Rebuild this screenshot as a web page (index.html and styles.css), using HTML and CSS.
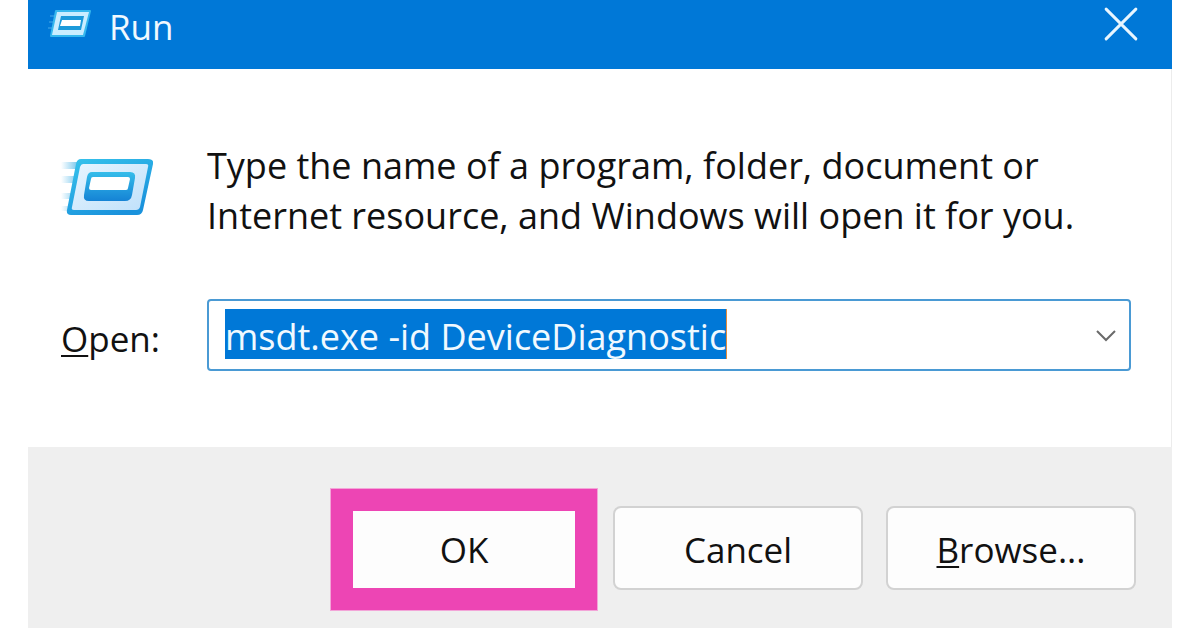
FILE: index.html
```html
<!DOCTYPE html>
<html lang="en">
<head>
<meta charset="utf-8">
<title>Run</title>
<link rel="stylesheet" href="styles.css">
</head>
<body>
<main class="dialog">
  <header class="titlebar">
    <svg class="titlebar-icon" viewBox="0 0 44 32" aria-hidden="true">
      <path d="M2 8h7M1 14h7M0 20h7" stroke="#2391e0" stroke-width="2"/>
      <path d="M8 3H42L36 28H3Z" fill="#36b8ee" stroke="#36b8ee" stroke-width="2" stroke-linejoin="round"/>
      <path d="M9 4H41L35 27H4Z" fill="#c9edff"/>
      <path d="M13 8H36L33 22H10Z" fill="#1c9ada"/>
      <path d="M14 12H33L32 18H12Z" fill="#fff"/>
    </svg>
    <h1 class="title">Run</h1>
    <button class="close" type="button" aria-label="Close">
      <svg class="close-icon" viewBox="0 0 32 32" aria-hidden="true"><path d="M2 2 30 30M30 2 2 30" fill="none" stroke="#e8f6ff" stroke-width="2.800" stroke-linecap="round"/></svg>
    </button>
  </header>
  <form class="form">
    <div class="body">
      <svg class="run-icon" viewBox="0 0 92 60" aria-hidden="true">
        <defs>
          <linearGradient id="frame" x1="0" y1="0" x2="0.600" y2="1"><stop offset="0" stop-color="#37c4ec"/><stop offset="1" stop-color="#1a92dc"/></linearGradient>
          <linearGradient id="pane" x1="0" y1="0" x2="1" y2="1"><stop offset="0" stop-color="#e8f5ff"/><stop offset="1" stop-color="#bfe0fa"/></linearGradient>
          <linearGradient id="inner" x1="0" y1="0" x2="0" y2="1"><stop offset="0" stop-color="#35bdea"/><stop offset="1" stop-color="#1583d5"/></linearGradient>
          <linearGradient id="trail" x1="0" y1="0" x2="1" y2="0"><stop offset="0" stop-color="#7cc9ef" stop-opacity="0"/><stop offset="1" stop-color="#6cc2ea"/></linearGradient>
        </defs>
        <path d="M0 5H18V12H0ZM0 19H14V26H0ZM0 36H12V42H0ZM0 49H9V54H0Z" fill="url(#trail)"/>
        <path d="M20 2H87Q93 2 92 7L82 53Q81 58 76 58H10Q5 58 6 53L15 7Q16 2 20 2Z" fill="url(#frame)"/>
        <path d="M22 7H85Q88 7 87 10L79 50Q78 53 75 53H13Q10 53 11 50L19 10Q20 7 22 7Z" fill="url(#pane)"/>
        <path d="M31 15H69Q75 15 74 21L71 38Q70 44 64 44H28Q22 44 23 38L26 20Q27 15 31 15Z" fill="url(#inner)"/>
        <path d="M32 20H67Q69 20 69 22L67 31Q67 33 65 33H30Q28 33 28 31L30 22Q30 20 32 20Z" fill="#fff"/>
      </svg>
      <p class="message">Type the name of a program, folder, document or<br>Internet resource, and Windows will open it for you.</p>
      <label class="label" for="command"><u class="key">O</u>pen:</label>
      <div class="combo">
        <input class="command" id="command" type="text" value="msdt.exe -id DeviceDiagnostic" spellcheck="false" autocomplete="off">
        <button class="drop" type="button" aria-label="Show recent commands">
          <svg class="drop-icon" viewBox="0 0 22 14" aria-hidden="true"><path d="M2 2 11 11 20 2" fill="none" stroke="#6a6a6a" stroke-width="2"/></svg>
        </button>
      </div>
    </div>
    <footer class="actions">
      <button class="button button-ok" type="submit">OK</button>
      <button class="button" type="button">Cancel</button>
      <button class="button button-browse" type="button"><span><u class="key">B</u>rowse...</span></button>
    </footer>
  </form>
</main>
</body>
</html>
```
FILE: styles.css
```css
* {
  box-sizing: border-box;
}

body {
  margin: 0;
  background: #fff;
  color: #111;
  font-family: "Open Sans", "Noto Sans", sans-serif;
  font-size: 35px;
}

button,
input {
  margin: 0;
  padding: 0;
  border: 0;
  font: inherit;
  color: inherit;
}

.dialog {
  display: flex;
  flex-direction: column;
  min-height: 100vh;
  margin: 0 28px;
}

.titlebar {
  display: flex;
  align-items: flex-start;
  height: 69px;
  padding: 2px 32px 0 20px;
  background: #0078d7;
  color: #f0f9ff;
}

.titlebar-icon {
  width: 44px;
  height: 32px;
  margin: 6px 17px 0 0;
}

.title {
  margin: 0;
  font-size: 35px;
  font-weight: 400;
  line-height: 50px;
}

.close {
  display: flex;
  margin: 3px 0 0 auto;
  padding: 2px;
  background: none;
}

.close-icon {
  width: 34px;
  height: 34px;
}

.form {
  display: flex;
  flex: 1;
  flex-direction: column;
}

.body {
  display: grid;
  grid-template-columns: 146px 1fr;
  row-gap: 58px;
  align-items: center;
  padding: 72px 40px 76px 33px;
  border-right: 1px solid #ececec;
}

.run-icon {
  width: 92px;
  height: 60px;
  margin-bottom: 8px;
}

.message {
  margin: 0;
  font-size: 36px;
  line-height: 50px;
  white-space: nowrap;
}

.label {
  padding-top: 8px;
  line-height: 50px;
}

.key {
  text-decoration-thickness: 2px;
  text-underline-offset: 3px;
}

.combo {
  display: flex;
  align-items: center;
  height: 72px;
  padding: 0 12px 2px 16px;
  border: 2px solid #4a9ad4;
  border-radius: 4px;
}

.command {
  field-sizing: content;
  height: 50px;
  padding-top: 4px;
  border-right: 1px solid #e08a3c;
  background: #0078d7;
  color: #f0f9ff;
  font-size: 36px;
  line-height: 46px;
  outline: 0;
}

.drop {
  display: flex;
  margin-left: auto;
  padding-top: 3px;
  background: none;
}

.drop-icon {
  width: 22px;
  height: 14px;
}

.actions {
  display: flex;
  flex: 1;
  align-items: center;
  justify-content: flex-end;
  padding: 40px 36px 17px;
  background: #efefef;
}

.button {
  width: 250px;
  height: 84px;
  margin-bottom: 3px;
  padding-top: 4px;
  border: 2px solid #d2d2d2;
  border-radius: 8px;
  background: #fdfdfd;
  line-height: 50px;
}

.button-ok {
  width: 268px;
  height: 123px;
  margin: 0 15px 0 0;
  padding-top: 2px;
  border: 23px solid #ed45b4;
  border-radius: 0;
  outline: 1px solid #f3a5d8;
  outline-offset: -1px;
}

.button-browse {
  margin-left: 23px;
}
```
